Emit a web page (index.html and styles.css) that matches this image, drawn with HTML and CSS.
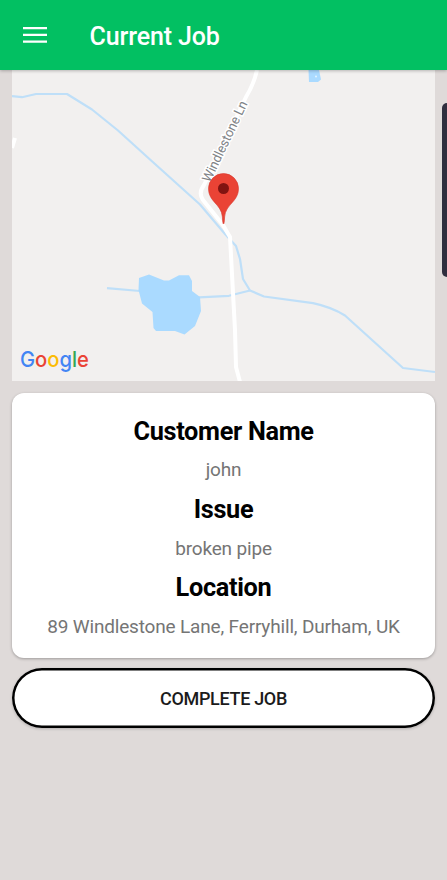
FILE: index.html
```html
<!DOCTYPE html>
<html lang="en">
<head>
<meta charset="utf-8">
<meta name="viewport" content="width=device-width, initial-scale=1">
<title>Current Job</title>
<link rel="stylesheet" href="styles.css">
</head>
<body>
<header class="app-bar">
  <button class="menu" aria-label="Menu">
    <svg width="24" height="16" viewBox="0 0 24 16"><path d="M0 1.2h24M0 7.9h24M0 14.6h24" stroke="#fff" stroke-width="2.3"/></svg>
  </button>
  <h1 class="title">Current Job</h1>
</header>
<main class="content">
  <svg class="map" viewBox="12 70 423 310.5">
    <g class="water-line">
      <path d="M12 96.200L22 97.200L36 94H67L92 109.500L118 130.500L150 159.500L200 204.500L225 234L236 246L240 259L243 279L250 290.500L264 296.500L313 303.200Q331 307 345 315.500L403 368L435 372"/>
      <path d="M107 288.200L140 291M199 297.300L229 295.800L250 290.500"/>
    </g>
    <path class="water" d="M139 278L149 274.500L164 280.500H169L179 275.300H189L192 281V291L200 297L201 311L195 326L184.500 334.500L175 331H156L153.500 328L152.500 312L142 303.500L138.500 290Z"/>
    <path class="water" d="M308.500 70H319L321 79.500L318 82H309Z"/>
    <circle cx="316" cy="76.500" r="1" fill="#e5f4ff"/>
    <path class="road" d="M257 70Q254 84 246 97L204 185Q198 193 203 200L223 225L230 237L235 330L236 367L240 382"/>
    <path class="road" d="M15 138L12 148"/>
    <text class="road-name" transform="translate(210 183) rotate(-64.500)" textLength="88" lengthAdjust="spacingAndGlyphs">Windlestone Ln</text>
    <path fill="#ea4335" stroke="#d7372d" stroke-width=".6" d="M223.500 224Q222.700 224 222.400 217C221.500 204 208.500 202 208.500 188.500A15 15 0 0 1 238.500 188.500C238.500 202 225.500 204 224.600 217Q224.300 224 223.500 224Z"/>
    <circle cx="223.500" cy="188.500" r="5.500" fill="#811411"/>
    <text class="logo" x="20" y="366.500" textLength="69" lengthAdjust="spacingAndGlyphs"><tspan fill="#4285f4">G</tspan><tspan fill="#ea4335">o</tspan><tspan fill="#fbbc05">o</tspan><tspan fill="#4285f4">g</tspan><tspan fill="#34a853">l</tspan><tspan fill="#ea4335">e</tspan></text>
  </svg>
  <section class="card">
    <h2 class="label">Customer Name</h2>
    <p class="value">john</p>
    <h2 class="label">Issue</h2>
    <p class="value">broken pipe</p>
    <h2 class="label">Location</h2>
    <p class="value">89 Windlestone Lane, Ferryhill, Durham, UK</p>
  </section>
  <button class="complete">COMPLETE JOB</button>
</main>
<div class="edge-handle"></div>
</body>
</html>
```
FILE: styles.css
```css
* { box-sizing: border-box; }
body {
  margin: 0;
  min-height: 880px;
  background: #dfdad9;
  font-family: Roboto, sans-serif;
  overflow: hidden;
}
.app-bar {
  position: relative;
  height: 70px;
  padding: 0 23px;
  display: flex;
  align-items: center;
  gap: 42.5px;
  background: #02c062;
  box-shadow: 0 1px 3px rgba(0, 0, 0, .25);
}
.menu {
  display: flex;
  padding: 0;
  border: 0;
  background: none;
}
.title {
  margin: 0;
  padding-top: 3px;
  font-size: 25px;
  font-weight: 500;
  line-height: 30px;
  letter-spacing: -.13px;
  color: #fff;
}
.content {
  display: flex;
  flex-direction: column;
  padding: 0 12px;
}
.map {
  display: block;
  width: 423px;
  height: 310.5px;
  background: #f2f0ef;
}
.water-line {
  fill: none;
  stroke: #bfdff8;
  stroke-width: 2.2;
  stroke-linejoin: round;
}
.water { fill: #aadaff; }
.road {
  fill: none;
  stroke: #fff;
  stroke-width: 4;
  stroke-linejoin: round;
}
.road-name {
  font-size: 13.5px;
  fill: #7f8387;
  stroke: #fff;
  stroke-width: 3px;
  paint-order: stroke;
}
.logo {
  font-family: Inter, sans-serif;
  font-size: 22px;
  font-weight: 500;
}
.card {
  height: 265px;
  margin-top: 12.5px;
  padding-top: 18.5px;
  border-radius: 12px;
  background: #fff;
  box-shadow: 0 1px 3px rgba(0, 0, 0, .3);
  text-align: center;
}
.label, .value {
  margin: 0;
  line-height: 39.15px;
}
.label {
  font-size: 25.3px;
  font-weight: 700;
  letter-spacing: -.32px;
  color: #000;
}
.value {
  font-size: 19px;
  letter-spacing: -.17px;
  color: #757575;
}
.label:first-child + .value {
  margin-top: -1px;
  margin-bottom: 1px;
}
.complete {
  height: 60px;
  margin-top: 10px;
  padding: 2px 0 0;
  border: 0;
  border-radius: 30px;
  background: #fff;
  box-shadow: inset 0 0 0 2.5px #000, 0 1px 3px rgba(0, 0, 0, .2);
  font: 500 18px/30px Roboto, sans-serif;
  letter-spacing: -.32px;
  color: #1b1b1b;
}
.edge-handle {
  position: absolute;
  top: 103px;
  right: 0;
  width: 5.5px;
  height: 174px;
  border-radius: 5px 0 0 5px;
  background: #2f2e3e;
}
```
